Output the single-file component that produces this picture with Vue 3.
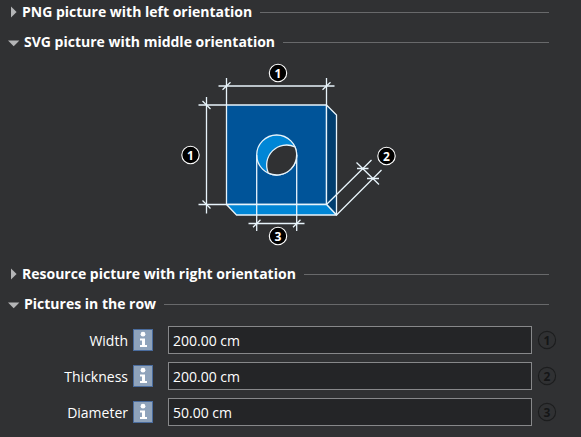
<script setup>
import { reactive } from 'vue'

const open = reactive({ png: false, svg: true, resource: false, row: true })

const fields = reactive([
  { id: 'width', label: 'Width', value: '200.00 cm', mark: 1 },
  { id: 'thickness', label: 'Thickness', value: '200.00 cm', mark: 2 },
  { id: 'diameter', label: 'Diameter', value: '50.00 cm', mark: 3 },
])

const marks = [
  { x: 278, y: 73, n: 1 },
  { x: 190.5, y: 155, n: 1 },
  { x: 386.5, y: 156, n: 2 },
  { x: 278, y: 236, n: 3 },
]

const arrowRight = 'M3 0.5L8.6 6L3 11.5Z'
const arrowDown = 'M0 4.5H11.4L5.7 10.2Z'
</script>

<template>
  <main class="panel">
    <button class="heading" type="button" :aria-expanded="open.png" @click="open.png = !open.png">
      <svg class="arrow" :class="{ down: open.png }"><path :d="open.png ? arrowDown : arrowRight" /></svg>
      <span class="title">PNG picture with left orientation</span>
      <span class="rule"></span>
    </button>

    <button class="heading" type="button" :aria-expanded="open.svg" @click="open.svg = !open.svg">
      <svg class="arrow" :class="{ down: open.svg }"><path :d="open.svg ? arrowDown : arrowRight" /></svg>
      <span class="title">SVG picture with middle orientation</span>
      <span class="rule"></span>
    </button>
    <div v-if="open.svg" class="figure">
      <svg width="219" height="190" viewBox="181 60 219 190">
        <g stroke="#e8f4fb" stroke-width="1.3" stroke-linejoin="round">
          <path d="M226.5 105H326.5V204.5H226.5Z" fill="#005499" />
          <path d="M326.5 105L336.5 115V215L326.5 204.5Z" fill="#003d6e" />
          <path d="M226.5 204.5H326.5L336.5 215H236.5Z" fill="#0086d6" />
          <circle cx="276.7" cy="155" r="20" fill="#0086d6" />
          <path d="M294.9 146.8A20 20 0 0 0 268.4 173.2A20 20 0 0 0 294.9 146.8Z" fill="#303133" />
        </g>
        <g stroke="#e8f4fb" stroke-width="1.3" fill="none">
          <path d="M226.5 78V105M326.5 78V105M218.5 86H334.5" />
          <path d="M206.5 97V213.5M198.5 105H226.5M198.5 204.5H226.5" />
          <path d="M256.7 155V231M296.7 155V231M248.5 223.5H304.5" />
          <path d="M326.5 204.5L371.5 160M336.5 215L381.5 170M356.5 162.5L379 184.5" />
          <path d="M222.5 89.8L230.5 82.2M322.5 89.8L330.5 82.2M202.5 101L210.5 109M202.5 200.5L210.5 208.5" />
          <path d="M253 227.2L260.5 219.8M293 227.2L300.5 219.8M357 168.5H368.5M367 178.5H379" />
        </g>
        <g v-for="(m, i) in marks" :key="i">
          <circle :cx="m.x" :cy="m.y" r="8.7" fill="#000" stroke="#fff" stroke-width="1.1" />
          <text class="digit" :x="m.x" :y="m.y + 4.5" fill="#fff">{{ m.n }}</text>
        </g>
      </svg>
    </div>

    <button class="heading" type="button" :aria-expanded="open.resource" @click="open.resource = !open.resource">
      <svg class="arrow" :class="{ down: open.resource }"><path :d="open.resource ? arrowDown : arrowRight" /></svg>
      <span class="title">Resource picture with right orientation</span>
      <span class="rule"></span>
    </button>

    <button class="heading" type="button" :aria-expanded="open.row" @click="open.row = !open.row">
      <svg class="arrow" :class="{ down: open.row }"><path :d="open.row ? arrowDown : arrowRight" /></svg>
      <span class="title">Pictures in the row</span>
      <span class="rule"></span>
    </button>
    <div v-if="open.row" class="fields">
      <div v-for="f in fields" :key="f.id" class="field">
        <label :for="f.id">{{ f.label }}</label>
        <svg class="info" width="20" height="22" viewBox="0 0 20 22">
          <rect x="0.5" y="0.5" width="19" height="21" fill="#8fa3bb" stroke="#4a6c9e" />
          <circle cx="10" cy="5.2" r="2.4" fill="#fff" />
          <path d="M7 9.5H12V16H14V18H7V16H9V11.5H7Z" fill="#fff" />
        </svg>
        <input :id="f.id" v-model="f.value" type="text" />
        <svg class="mark" width="20" height="20" viewBox="0 0 20 20">
          <circle cx="10" cy="10" r="8.6" fill="none" stroke="#1c1d1e" stroke-width="1.1" />
          <text class="digit" x="10" y="14.5" fill="#151617">{{ f.mark }}</text>
        </svg>
      </div>
    </div>
  </main>
</template>

<style>
body {
  margin: 0;
  background: #303133;
}
</style>

<style scoped>
.panel {
  display: flex;
  flex-direction: column;
  gap: 6px;
  color: #fff;
  font-family: "Segoe UI", "Open Sans", "Noto Sans", sans-serif;
  font-size: 14px;
}

.heading {
  display: flex;
  align-items: center;
  height: 24px;
  margin: 0;
  padding: 0 32px 0 8px;
  border: 0;
  background: none;
  color: inherit;
  font: inherit;
  font-weight: 700;
  line-height: 24px;
  text-align: left;
}

.arrow {
  flex: none;
  width: 14px;
  height: 12px;
  fill: #b4b5b7;
}

.arrow.down {
  width: 16px;
}

.title {
  white-space: nowrap;
}

.rule {
  flex: 1;
  height: 1px;
  margin-left: 8px;
  background: #68696b;
}

.figure {
  display: flex;
  justify-content: center;
  height: 196px;
}

.digit {
  font-family: "Open Sans", "Noto Sans", sans-serif;
  font-size: 12px;
  font-weight: 700;
  text-anchor: middle;
}

.fields {
  display: flex;
  flex-direction: column;
  gap: 8px;
  padding: 4px 24px 11px 8px;
}

.field {
  display: grid;
  grid-template-columns: 125px 20px 1fr 20px;
  align-items: center;
}

label {
  padding-right: 5px;
  text-align: right;
}

input {
  box-sizing: border-box;
  min-width: 0;
  height: 28px;
  margin: 0 5px 0 15px;
  padding: 0 4px;
  border: 1px solid #87888a;
  border-radius: 0;
  outline: none;
  background: #242527;
  color: #fff;
  font: inherit;
}
</style>
